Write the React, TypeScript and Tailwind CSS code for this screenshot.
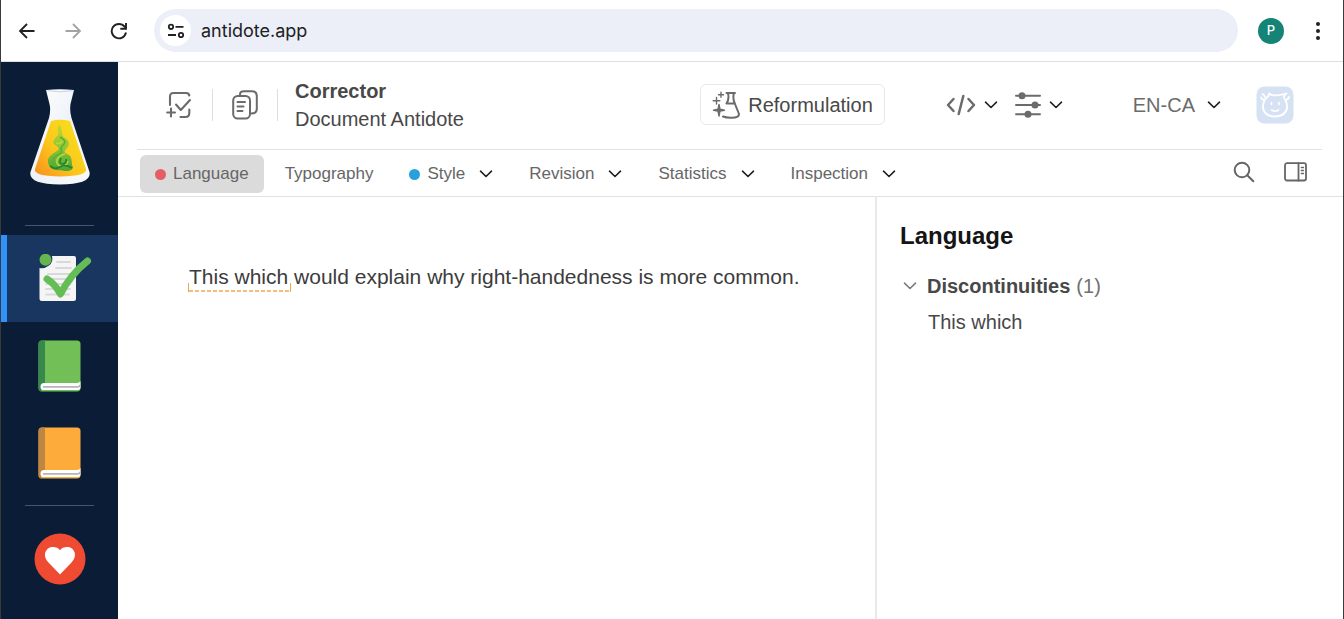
import React from 'react';

type IconProps = { className?: string };

const Chevron = ({ className = 'text-[#1f1f1f]' }: IconProps) => (
  <svg width="14" height="8" viewBox="0 0 14 8" fill="none" stroke="currentColor" strokeWidth="1.600" strokeLinecap="round" strokeLinejoin="round" className={className} aria-hidden="true">
    <path d="M1.500 1.200 7 6.500l5.500-5.300" />
  </svg>
);

const BackIcon = ({ className }: IconProps) => (
  <svg width="18" height="18" viewBox="0 0 18 18" fill="none" stroke="currentColor" strokeWidth="1.800" className={className} aria-hidden="true">
    <path d="M16.500 9H2.500M9 2 2 9l7 7" />
  </svg>
);

const ReloadIcon = () => (
  <svg width="18" height="18" viewBox="0 0 18 18" fill="none" stroke="currentColor" strokeWidth="1.900" aria-hidden="true">
    <path d="M16 10.500A7.200 7.200 0 1 1 14.600 4.700L16 6.300" />
    <path d="M16 1v5.700h-5.700" />
  </svg>
);

const SiteInfoIcon = () => (
  <svg width="18" height="16" viewBox="0 0 18 16" fill="none" stroke="currentColor" strokeWidth="1.800" aria-hidden="true">
    <circle cx="4" cy="3.800" r="2.200" />
    <path d="M8.500 3.800H16.500M1 12h8" />
    <circle cx="14" cy="12" r="2.200" />
  </svg>
);

const FlaskLogo = () => (
  <svg width="62" height="98" viewBox="0 0 62 98" aria-hidden="true">
    <defs>
      <linearGradient id="liquid" x1="0" y1="1" x2="1" y2="0">
        <stop offset="0" stopColor="#f98e1d" />
        <stop offset="0.45" stopColor="#fcc81c" />
        <stop offset="1" stopColor="#f5e51d" />
      </linearGradient>
      <linearGradient id="glass" x1="0" y1="0" x2="1" y2="1">
        <stop offset="0" stopColor="#ffffff" />
        <stop offset="0.5" stopColor="#eef2f8" />
        <stop offset="1" stopColor="#f8fafc" />
      </linearGradient>
      <linearGradient id="smoke" x1="0" y1="0" x2="0" y2="1">
        <stop offset="0" stopColor="#c3d92c" />
        <stop offset="0.500" stopColor="#8dc637" />
        <stop offset="1" stopColor="#4aa534" />
      </linearGradient>
    </defs>
    <path d="M17 2Q31 .5 45 2L41.500 16Q40.500 23 42.500 30L60.500 84Q63 96 31 96.500 -1 96 1.500 84L20 30Q22 22 20.500 16Z" fill="url(#glass)" />
    <path d="M18 2.700Q31 4.900 44 2.700" fill="none" stroke="#c9d5e3" />
    <path d="M22 33Q31 30.500 41 33L57 81Q59 88 31 88.500 4 88 6 81Z" fill="url(#liquid)" />
    <path d="M31 37C26 41 31 44 29 47 26 50 23 53 25 56 27 58 31 59 29 62 26 65 19 67 19 73 19 80 25 83 31 82 37 84 44 83 44 79 42 77 44 70 40 67 36 65 34 64 37 61 41 57 41 53 36 50 32 48 34 44 31 37Z" fill="url(#smoke)" />
    <path d="M31 49C36 52 38 54 33 58 30 61 35 63 31 66 26 68 22 71 24 76" fill="none" stroke="#5bae35" strokeWidth="1.500" />
    <path d="M27 55Q31 57 33 53M36 66C31 67 27 70 28 75 30 80 38 79 39 73" fill="none" stroke="#b9d93c" strokeWidth="1.500" />
    <path d="M32 70Q29 76 34 76 38 75 37 71M21 78Q26 82 31 79T43 80" fill="none" stroke="#288431" strokeWidth="1.700" />
  </svg>
);

const CorrectorIcon = () => (
  <svg width="54" height="50" viewBox="0 0 54 50" aria-hidden="true">
    <path d="M14 2H36a2 2 0 0 1 2 2V44.500a2.500 2.500 0 0 1-2.500 2.500H4a2.500 2.500 0 0 1-2.500-2.500V14q5 1 9.500-2.500T14 2Z" fill="#f5f5f5" />
    <path d="M19 8h13M18 14h15M10 20h22M8 25h24M8 30h24M8 35h24M8 40.500h23" stroke="#d8d9da" strokeWidth="1.800" strokeLinecap="round" />
    <circle cx="7.500" cy="5.800" r="6" fill="#65b74d" />
    <path d="M9 25Q17 30 22.500 40 32 21 49.500 7" fill="none" stroke="#65bd55" strokeWidth="7" strokeLinecap="round" strokeLinejoin="round" />
  </svg>
);

const Book = ({ cover, spine }: { cover: string; spine: string }) => (
  <svg width="43" height="52" viewBox="0 0 43 52" aria-hidden="true">
    <rect x="0.500" y="0.500" width="42" height="51" rx="3.500" fill={cover} />
    <path d="M4 .5H7V43Q3 44 3 48L4 51.500Q.5 51.500 .5 48V4Q.5 .5 4 .5Z" fill={spine} />
    <path d="M42.500 41V48Q42 50 40 50H5Q2.500 50 2.500 46.500T6 43H39Q41.500 43 42.500 41Z" fill="#fff" />
    <path d="M5 46.800H40Q41.500 46.800 42.500 45" fill="none" stroke="#b5b5b5" strokeWidth="1.800" />
  </svg>
);

const HeartBadge = () => (
  <svg width="52" height="52" viewBox="0 0 52 52" aria-hidden="true">
    <circle cx="26" cy="26" r="25.500" fill="#ef4a32" />
    <path d="M26 41.500 14.500 29.500C7.500 22 12 14 19 14c3 0 5.500 1.200 7 3.200 1.500-2 4-3.200 7-3.200 7 0 11.500 8 4.500 15.500Z" fill="#fff" />
  </svg>
);

const NewCheckIcon = () => (
  <svg width="26" height="28" viewBox="0 0 26 28" fill="none" stroke="currentColor" strokeWidth="2.100" strokeLinecap="round" strokeLinejoin="round" aria-hidden="true">
    <path d="M4 14V5.500Q4 2 7.500 2H20Q23 2 23.300 4.500M14.500 26H19.500Q23.300 26 23.300 22V18.500" />
    <path d="M10 13.500 14.800 19 24 9M5 17.500V25.500M1.200 21.500H9" />
  </svg>
);

const CopyIcon = () => (
  <svg width="26" height="30" viewBox="0 0 26 30" fill="none" stroke="currentColor" strokeWidth="2" strokeLinecap="round" strokeLinejoin="round" aria-hidden="true">
    <path d="M8 5V4.500Q8 1.300 12 1.300H20Q24.800 1.300 24.800 6V19Q24.800 23.500 19 23.500" />
    <rect x="1.200" y="6" width="16.800" height="22.500" rx="4.500" />
    <path d="M5.500 12H13M5.500 16.500H11.500M5.500 21H10.500" />
  </svg>
);

const RewordIcon = () => (
  <svg width="28" height="28" viewBox="0 0 28 28" fill="none" stroke="currentColor" strokeWidth="2" strokeLinecap="round" strokeLinejoin="round" aria-hidden="true">
    <path d="M14.500 2H23M16 2.500Q17.500 8 14.500 12.500M21.800 2.500Q20.500 8 23 13L26.800 22.500Q28 26.500 19.500 26.700 14 26.800 11 25.500M14.500 12.500H22.500" />
    <path d="M7 13.500 8 18.300 12.500 19.200 8 20.100 7 25 6 20.100 1.500 19.200 6 18.300Z M4.500 6.500V13M1.200 9.800H7.800M9 1.200V6.200M6.500 3.700H11.500" fill="currentColor" strokeWidth="1.400" />
  </svg>
);

const CodeIcon = () => (
  <svg width="30" height="22" viewBox="0 0 30 22" fill="none" stroke="currentColor" strokeWidth="2.500" strokeLinecap="round" strokeLinejoin="round" aria-hidden="true">
    <path d="M7.500 5 2 11l5.500 6M22.500 5 28 11l-5.500 6M17.300 2 12.700 20" />
  </svg>
);

const SlidersIcon = () => (
  <svg width="26" height="26" viewBox="0 0 26 26" fill="none" stroke="currentColor" strokeWidth="2" strokeLinecap="round" aria-hidden="true">
    <path d="M1 3.800H25M1 13H25M1 22.200H25" />
    <g fill="currentColor" stroke="none">
      <circle cx="7" cy="3.800" r="3.500" />
      <circle cx="20" cy="13" r="3.500" />
      <circle cx="13" cy="22.200" r="3.500" />
    </g>
  </svg>
);

const AvatarIcon = () => (
  <svg width="38" height="38" viewBox="0 0 38 38" fill="none" stroke="#fff" strokeLinecap="round" strokeLinejoin="round" aria-hidden="true">
    <rect x="0.500" y="0.500" width="37" height="37" rx="8" fill="#d6e2f4" stroke="none" />
    <path d="M8.500 14Q6 20 7.500 24 10.500 30.500 19 30.500T30.500 24Q32 20 29.500 14" strokeWidth="1.900" />
    <path d="M13.500 7.500Q15 9.800 20 9.300 27 8.800 30.500 7.500 27.500 9.500 28 12M13.500 7.500Q12.500 11 8.500 14" strokeWidth="1.800" />
    <path d="M6.500 8Q8.500 9 9 11M5 11.500Q6 14.500 9 13.500M33 11Q32.500 14 29 13.500" strokeWidth="1.800" />
    <path d="M15.500 16.500V18.500M23 16.500V18.500M15.500 24Q19 26.500 22.500 24" strokeWidth="1.600" />
  </svg>
);

const SearchIcon = () => (
  <svg width="22" height="22" viewBox="0 0 22 22" fill="none" stroke="currentColor" strokeWidth="2" strokeLinecap="round" aria-hidden="true">
    <circle cx="9" cy="9" r="7.300" />
    <path d="m14.300 14.300 6 6" />
  </svg>
);

const PanelIcon = () => (
  <svg width="23" height="20" viewBox="0 0 23 20" fill="none" stroke="currentColor" strokeWidth="1.800" strokeLinecap="round" aria-hidden="true">
    <rect x="1" y="1.200" width="21" height="17.300" rx="2" />
    <path d="M14.500 1.500V18.500" />
    <path d="M17.300 5.500H19.500M17.300 8.500H19.500M17.300 11.500H19.500" strokeWidth="1.300" />
  </svg>
);

const BrowserBar = () => (
  <header className="flex h-[62px] items-center border-b border-[#dedede] px-[17px] font-['Inter',sans-serif] text-[#202124]">
    <nav aria-label="Browser" className="flex items-center gap-7">
      <button aria-label="Back"><BackIcon /></button>
      <button aria-label="Forward" className="text-[#a3a3a3]"><BackIcon className="rotate-180" /></button>
      <button aria-label="Reload"><ReloadIcon /></button>
    </nav>
    <div className="ml-[26px] flex h-[43px] flex-1 items-center gap-[10px] rounded-full bg-[#eceff7] pl-[6px]">
      <button aria-label="Site information" className="flex size-[31px] items-center justify-center rounded-full bg-white"><SiteInfoIcon /></button>
      <input aria-label="Address" defaultValue="antidote.app" className="min-w-0 flex-1 bg-transparent text-[18px] leading-6 outline-none" />
    </div>
    <button aria-label="Profile" className="ml-5 flex size-[26px] items-center justify-center rounded-full bg-[#158476] text-[13px] font-medium text-white">P</button>
    <button aria-label="Menu" className="ml-7 mr-[2px] flex flex-col items-center gap-[3px] px-1">
      <span className="size-1 rounded-full bg-[#202124]" />
      <span className="size-1 rounded-full bg-[#202124]" />
      <span className="size-1 rounded-full bg-[#202124]" />
    </button>
  </header>
);

const Sidebar = () => (
  <nav aria-label="Tools" className="flex w-[117px] shrink-0 flex-col bg-[#0b1c36]">
    <a href="#home" aria-label="Antidote" className="flex justify-center pb-[39px] pt-[26px]"><FlaskLogo /></a>
    <hr className="mx-6 border-[#46566f]" />
    <a href="#corrector" aria-label="Corrector" aria-current="page" className="mt-[9px] flex h-[87px] items-center justify-center border-l-[6px] border-[#2f93fb] bg-[#18365f] pl-1"><CorrectorIcon /></a>
    <a href="#dictionaries" aria-label="Dictionaries" className="flex h-[87px] items-center justify-center"><Book cover="#72bf57" spine="#36884d" /></a>
    <a href="#guides" aria-label="Guides" className="flex h-[87px] items-center justify-center"><Book cover="#fdab3a" spine="#bd8642" /></a>
    <hr className="mx-6 mt-[9px] border-[#46566f]" />
    <a href="#favourites" aria-label="Favourites" className="flex justify-center py-[27px]"><HeartBadge /></a>
  </nav>
);

const Toolbar = () => (
  <div className="ml-[19px] mr-[21px] flex h-[88px] items-center border-b border-[#e2e2e2] pb-[2px] pl-[29px] pr-7 text-xl text-[#6b6b6b]">
    <button aria-label="New correction"><NewCheckIcon /></button>
    <span className="ml-5 mr-[19px] h-8 w-px bg-[#dedede]" />
    <button aria-label="Copy text"><CopyIcon /></button>
    <span className="ml-[19px] mr-[17px] h-8 w-px bg-[#dedede]" />
    <div className="leading-7 text-[#484848]">
      <h1 className="font-bold">Corrector</h1>
      <p>Document Antidote</p>
    </div>
    <button className="ml-auto flex h-[41px] items-center gap-2 rounded-md border border-[#e8e8e8] px-[11px] text-[#484848]">
      <span className="text-[#6b6b6b]"><RewordIcon /></span>
      Reformulation
    </button>
    <button aria-label="Source" className="ml-[61px] flex items-center gap-2"><CodeIcon /><Chevron /></button>
    <button aria-label="Settings" className="ml-[17px] flex items-center gap-2"><SlidersIcon /><Chevron /></button>
    <button className="ml-[70px] flex items-center gap-3">EN-CA<Chevron /></button>
    <button aria-label="Account" className="ml-[35px]"><AvatarIcon /></button>
  </div>
);

const tabs = [
  { label: 'Language', dot: 'bg-[#e35f65]', active: true, menu: false },
  { label: 'Typography', dot: '', active: false, menu: false },
  { label: 'Style', dot: 'bg-[#2aa0da]', active: false, menu: true },
  { label: 'Revision', dot: '', active: false, menu: true },
  { label: 'Statistics', dot: '', active: false, menu: true },
  { label: 'Inspection', dot: '', active: false, menu: true },
];

const TabBar = () => (
  <div className="flex items-center border-b border-[#e2e2e2] pb-[3px] pl-[22px] pr-9 pt-[5px] text-[#666]">
    <nav aria-label="Filters" className="flex gap-[6px]">
      {tabs.map((tab) => (
        <button key={tab.label} className={`flex h-[38px] items-center rounded-md px-[15px] text-[17px] ${tab.active ? 'bg-[#dbdbdb]' : ''}`}>
          {tab.dot && <span className={`mr-[7px] size-[11px] rounded-full ${tab.dot}`} />}
          {tab.label}
          {tab.menu && <Chevron className="ml-[14px] text-[#1f1f1f]" />}
        </button>
      ))}
    </nav>
    <div className="ml-auto flex items-center gap-[29px] pb-1">
      <button aria-label="Search"><SearchIcon /></button>
      <button aria-label="Toggle panel"><PanelIcon /></button>
    </div>
  </div>
);

const Editor = () => (
  <main className="flex-1 pl-[71px] pr-8 pt-16 text-[21px] leading-8 text-[#3c3c3c]">
    <p>
      <span className="relative">
        This which
        <span className="absolute -bottom-1 -left-px -right-[3px] flex h-[9px] items-end border-x border-[#f0a850]">
          <span className="h-[2px] flex-1 bg-[repeating-linear-gradient(90deg,#f4bd7c_0_4px,transparent_4px_6px)]" />
        </span>
      </span>{' '}
      would explain why right-handedness is more common.
    </p>
  </main>
);

const Results = () => (
  <aside className="w-[468px] border-l-2 border-[#e9e9e9] pl-[23px] pr-6 pt-[23px] text-xl">
    <h2 className="text-2xl font-bold text-[#151515]">Language</h2>
    <section className="mt-4 leading-9 text-[#484848]">
      <button aria-expanded="true" className="flex items-center pl-[3px]">
        <Chevron className="mr-[10px] text-[#7b7b7b]" />
        <span className="font-bold">Discontinuities</span>
        <span className="ml-[6px] text-[#707070]">(1)</span>
      </button>
      <a href="#this-which" className="block pl-7">This which</a>
    </section>
  </aside>
);

export default function App() {
  return (
    <div className="flex min-h-screen flex-col border-x border-[#3a3a3c] bg-white font-['Liberation_Sans',Arial,sans-serif]">
      <BrowserBar />
      <div className="flex flex-1">
        <Sidebar />
        <div className="flex min-w-0 flex-1 flex-col">
          <Toolbar />
          <TabBar />
          <div className="flex flex-1">
            <Editor />
            <Results />
          </div>
        </div>
      </div>
    </div>
  );
}
